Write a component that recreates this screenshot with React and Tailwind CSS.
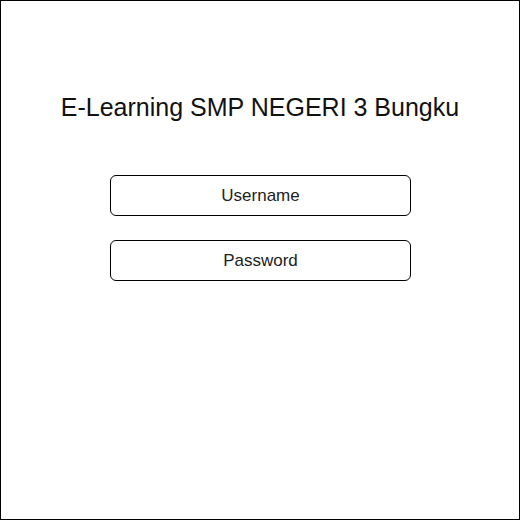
import React from 'react';

const App = () => {
  return (
    <div className="w-[520px] h-[520px] border border-black bg-white font-['Liberation_Sans',Arial,sans-serif]">
      <h1 className="pt-[91px] text-center text-[25px] leading-[30px] text-[#111]">
        E-Learning SMP NEGERI 3 Bungku
      </h1>
      <div className="mt-[53px] ml-[109px] flex flex-col gap-[24px]">
        <div className="w-[301px] h-[41px] border border-black rounded-[6px] flex items-center justify-center text-[17px] text-[#222]">
          Username
        </div>
        <div className="w-[301px] h-[41px] border border-black rounded-[6px] flex items-center justify-center text-[17px] text-[#222]">
          Password
        </div>
      </div>
    </div>
  );
};

export default App;
